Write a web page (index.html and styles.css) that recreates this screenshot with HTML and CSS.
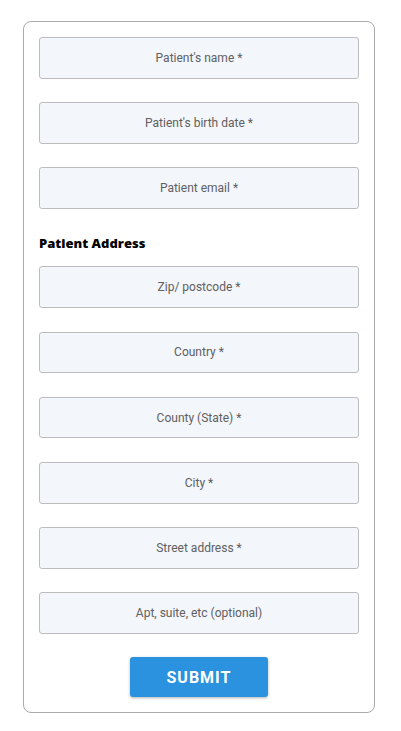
FILE: index.html
```html
<!DOCTYPE html>
<html>
<head>
<meta charset="utf-8">
<link rel="stylesheet" href="styles.css">
</head>
<body>
<div class="page">
  <form class="card">
    <div class="fields">
      <input class="field" type="text" placeholder="Patient's name *">
      <input class="field" type="text" placeholder="Patient's birth date *">
      <input class="field" type="text" placeholder="Patient email *">
    </div>
    <h3 class="heading">Patient Address</h3>
    <div class="fields">
      <input class="field" type="text" placeholder="Zip/ postcode *">
      <input class="field" type="text" placeholder="Country *">
      <input class="field" type="text" placeholder="County (State) *">
      <input class="field" type="text" placeholder="City *">
      <input class="field" type="text" placeholder="Street address *">
      <input class="field" type="text" placeholder="Apt, suite, etc (optional)">
    </div>
    <div class="actions">
      <button class="submit" type="button">SUBMIT</button>
    </div>
  </form>
</div>
</body>
</html>
```

FILE: styles.css
```css
* { box-sizing: border-box; }
html, body { margin: 0; padding: 0; background: #fff; }
.page {
  padding: 21px 26px 0 23px;
}
.card {
  width: 352px;
  border: 1px solid #aaaaaa;
  border-radius: 8px;
  padding: 15px 15px 14.5px 15px;
  display: flex;
  flex-direction: column;
}
.fields {
  display: flex;
  flex-direction: column;
  gap: 23.6px;
}
.field {
  display: block;
  width: 320px;
  height: 41.6px;
  margin: 0;
  border: 1px solid #bcbcbc;
  border-radius: 3px;
  background: #f3f6fb;
  font-family: Roboto, "Liberation Sans", sans-serif;
  font-size: 12px;
  text-align: center;
  color: #333;
  outline: none;
  padding: 0 10px;
}
.field::placeholder { color: #606060; opacity: 1; }
.heading {
  margin: 0;
  padding: 24px 0 0 0;
  height: 57.4px;
  font-family: "Open Sans", "DejaVu Sans", sans-serif;
  font-weight: 800;
  font-size: 13px;
  line-height: 20px;
  color: #000;
}
.actions {
  display: flex;
  justify-content: center;
  padding-top: 23.6px;
}
.submit {
  width: 138px;
  height: 40px;
  border: none;
  border-radius: 3px;
  background: #2a92de;
  color: #fff;
  font-family: Roboto, "Liberation Sans", sans-serif;
  font-weight: 700;
  font-size: 16px;
  letter-spacing: 1px;
  box-shadow: 0 1px 3px rgba(0,0,0,0.3);
  cursor: pointer;
}
```
